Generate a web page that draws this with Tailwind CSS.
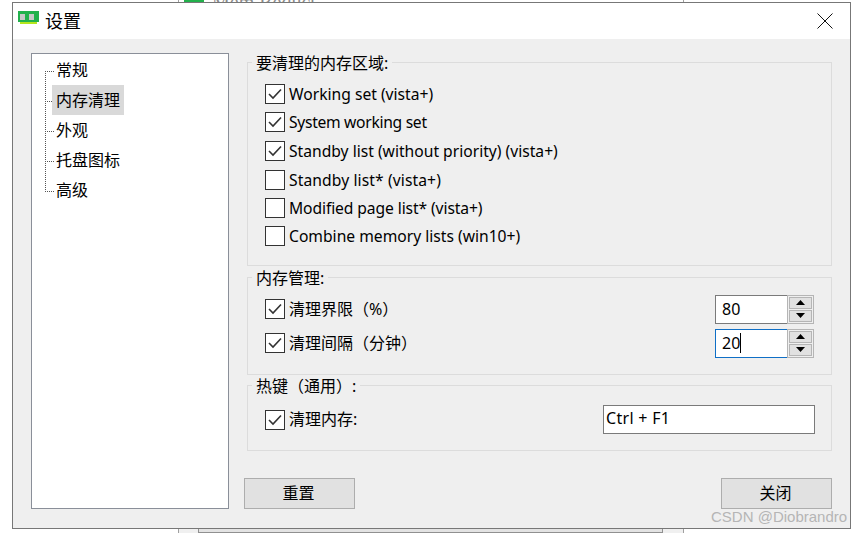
<!DOCTYPE html>
<html lang="zh">
<head>
  <meta charset="UTF-8" />
  <title>设置</title>
  <script src="https://cdn.jsdelivr.net/npm/@tailwindcss/browser@4"></script>
</head>
<body class="bg-white">
  <div class="relative w-[864px] h-[533px] overflow-hidden bg-white text-black text-[16px] leading-[22px] [text-spacing-trim:space-all] font-['Noto_Sans','Noto_Sans_CJK_SC',sans-serif]">

    <!-- window behind the dialog -->
    <div class="absolute left-[178px] top-[-8px] w-[506px] h-[541px] bg-white border-x border-[#a0a0a0]">
      <div class="flex items-center gap-[8px] pl-[5px] text-[#8a8a8a] text-[20px] leading-[20px]">
        <span class="w-[20px] h-[12px] bg-[#22b14c]"></span>
        <span class="font-['Liberation_Serif',serif]">Mem Reduct</span>
      </div>
      <div class="absolute left-0 right-0 bottom-0 h-[5px] bg-[#f0f0f0] px-[19px]">
        <div class="w-[465px] h-full bg-[#e3e3e3] border-x border-b border-[#909090]"></div>
      </div>
    </div>

    <!-- dialog -->
    <div class="relative ml-[12px] mt-[2px] w-[839px] h-[527px] border border-[#777777] bg-[#efefef] flex flex-col">
      <div class="h-[36px] shrink-0 bg-white flex items-center pl-[5px]">
        <svg class="w-[21px] h-[14px] mt-[-6px]" viewBox="0 0 21 14">
          <rect x="0" y="0" width="21" height="11" fill="#22b14c" />
          <rect x="2" y="11" width="17" height="2" fill="#b5e61d" />
          <rect x="2" y="3" width="5" height="6" fill="#c8c8c8" />
          <rect x="11" y="3" width="5" height="6" fill="#c8c8c8" />
        </svg>
        <span class="ml-[6px] text-[18px]">设置</span>
        <svg class="ml-auto mr-[17px] w-[16px] h-[16px]" viewBox="0 0 16 16" fill="none" stroke="#111111" stroke-width="1">
          <path d="M0.5 0.5L15.5 15.5M15.5 0.5L0.5 15.5" />
        </svg>
      </div>

      <div class="flex-1 flex pl-[18px] pt-[14px] pb-[19px]">
        <!-- tree -->
        <div class="relative w-[198px] h-full bg-white border border-[#8a8f99] pt-[1px] shrink-0">
          <svg class="absolute left-[13px] top-[17px] w-[10px] h-[121px]" viewBox="0 0 10 121" fill="none" stroke="#555555" stroke-dasharray="1 1" shape-rendering="crispEdges">
            <path d="M0.5 0V121" />
            <path d="M0 0.5H10M0 30.5H10M0 60.5H10M0 90.5H10M0 120.5H10" />
          </svg>
          <div class="relative h-[30px] pl-[20px] flex items-center"><span class="px-[4px] leading-[30px]">常规</span></div>
          <div class="relative h-[30px] pl-[20px] flex items-center"><span class="px-[4px] leading-[30px] bg-[#d9d9d9]">内存清理</span></div>
          <div class="relative h-[30px] pl-[20px] flex items-center"><span class="px-[4px] leading-[30px]">外观</span></div>
          <div class="relative h-[30px] pl-[20px] flex items-center"><span class="px-[4px] leading-[30px]">托盘图标</span></div>
          <div class="relative h-[30px] pl-[20px] flex items-center"><span class="px-[4px] leading-[30px]">高级</span></div>
        </div>

        <!-- right column -->
        <div class="ml-[15px] w-[588px] flex flex-col pt-[9px]">
          <section class="relative ml-[3px] h-[204px] border border-[#dcdcdc] pl-[17px] pt-[17px]">
            <span class="absolute left-[4px] top-[-11px] px-[4px] bg-[#efefef]">要清理的内存区域:</span>
            <div class="flex flex-col text-[15.65px]">
              <label class="h-[28px] flex items-center gap-[4px]">
                <span class="w-[20px] h-[20px] bg-white border border-[#333333] flex items-center justify-center"><svg class="w-[14px] h-[12px]" viewBox="0 0 14 12" fill="none" stroke="#333333" stroke-width="1.6"><path d="M1 6L5 10L13 1.5" /></svg></span>
                Working set (vista+)
              </label>
              <label class="h-[28px] mb-[1px] flex items-center gap-[4px] tracking-[-0.3px]">
                <span class="w-[20px] h-[20px] bg-white border border-[#333333] flex items-center justify-center"><svg class="w-[14px] h-[12px]" viewBox="0 0 14 12" fill="none" stroke="#333333" stroke-width="1.6"><path d="M1 6L5 10L13 1.5" /></svg></span>
                System working set
              </label>
              <label class="h-[28px] flex items-center gap-[4px]">
                <span class="w-[20px] h-[20px] bg-white border border-[#333333] flex items-center justify-center"><svg class="w-[14px] h-[12px]" viewBox="0 0 14 12" fill="none" stroke="#333333" stroke-width="1.6"><path d="M1 6L5 10L13 1.5" /></svg></span>
                Standby list (without priority) (vista+)
              </label>
              <label class="h-[29px] flex items-center gap-[4px] tracking-[0.1px]">
                <span class="w-[20px] h-[20px] bg-white border border-[#333333]"></span>
                Standby list* (vista+)
              </label>
              <label class="h-[28px] flex items-center gap-[4px] tracking-[-0.1px]">
                <span class="w-[20px] h-[20px] bg-white border border-[#333333]"></span>
                Modified page list* (vista+)
              </label>
              <label class="h-[28px] flex items-center gap-[4px]">
                <span class="w-[20px] h-[20px] bg-white border border-[#333333]"></span>
                Combine memory lists (win10+)
              </label>
            </div>
          </section>

          <section class="relative ml-[3px] mt-[11px] h-[98px] border border-[#dcdcdc] pl-[17px] pt-[17px] pr-[17px]">
            <span class="absolute left-[4px] top-[-11px] px-[4px] bg-[#efefef]">内存管理:</span>
            <div class="flex flex-col gap-[6px]">
              <div class="h-[28px] flex items-center gap-[4px]">
                <span class="w-[20px] h-[20px] bg-white border border-[#333333] flex items-center justify-center"><svg class="w-[14px] h-[12px]" viewBox="0 0 14 12" fill="none" stroke="#333333" stroke-width="1.6"><path d="M1 6L5 10L13 1.5" /></svg></span>
                清理界限（%）
                <div class="ml-auto w-[99px] h-[29px] flex">
                  <div class="w-[72px] bg-white border-y border-l border-[#7a7a7a] pl-[6px] leading-[27px]">80</div>
                  <div class="w-[27px] border border-[#b5b5b5] flex flex-col p-[1px] gap-[1px]">
                    <div class="flex-1 bg-[#e1e1e1] border border-[#b5b5b5] flex items-center justify-center"><svg class="w-[9px] h-[5px]" viewBox="0 0 9 5"><path d="M4.5 0L9 5H0Z" /></svg></div>
                    <div class="flex-1 bg-[#e1e1e1] border border-[#b5b5b5] flex items-center justify-center"><svg class="w-[9px] h-[5px]" viewBox="0 0 9 5"><path d="M0 0H9L4.5 5Z" /></svg></div>
                  </div>
                </div>
              </div>
              <div class="h-[28px] flex items-center gap-[4px]">
                <span class="w-[20px] h-[20px] bg-white border border-[#333333] flex items-center justify-center"><svg class="w-[14px] h-[12px]" viewBox="0 0 14 12" fill="none" stroke="#333333" stroke-width="1.6"><path d="M1 6L5 10L13 1.5" /></svg></span>
                清理间隔（分钟）
                <div class="ml-auto w-[99px] h-[29px] flex">
                  <div class="w-[72px] bg-white border-y border-l border-[#0f6fc6] pl-[6px] leading-[27px] flex"><span>20</span><span class="w-[1px] h-[20px] mt-[3px] bg-black"></span></div>
                  <div class="w-[27px] border border-[#b5b5b5] flex flex-col p-[1px] gap-[1px]">
                    <div class="flex-1 bg-[#e1e1e1] border border-[#b5b5b5] flex items-center justify-center"><svg class="w-[9px] h-[5px]" viewBox="0 0 9 5"><path d="M4.5 0L9 5H0Z" /></svg></div>
                    <div class="flex-1 bg-[#e1e1e1] border border-[#b5b5b5] flex items-center justify-center"><svg class="w-[9px] h-[5px]" viewBox="0 0 9 5"><path d="M0 0H9L4.5 5Z" /></svg></div>
                  </div>
                </div>
              </div>
            </div>
          </section>

          <section class="relative ml-[3px] mt-[10px] h-[66px] border border-[#dcdcdc] pl-[17px] pt-[19px] pr-[16px]">
            <span class="absolute left-[4px] top-[-11px] px-[4px] bg-[#efefef]">热键（通用）:</span>
            <div class="h-[29px] flex items-center gap-[4px]">
              <span class="w-[20px] h-[20px] bg-white border border-[#333333] flex items-center justify-center"><svg class="w-[14px] h-[12px]" viewBox="0 0 14 12" fill="none" stroke="#333333" stroke-width="1.6"><path d="M1 6L5 10L13 1.5" /></svg></span>
              <span class="mt-[-2px]">清理内存:</span>
              <div class="ml-auto w-[212px] h-[29px] bg-white border border-[#7a7a7a] pl-[2px] leading-[25px] tracking-[0.3px]">Ctrl + F1</div>
            </div>
          </section>

          <div class="mt-auto flex justify-between">
            <button class="w-[111px] h-[31px] bg-[#e1e1e1] border border-[#adadad] pb-[2px] pr-[2px]">重置</button>
            <button class="w-[111px] h-[31px] bg-[#e1e1e1] border border-[#adadad] pb-[2px] pr-[2px]">关闭</button>
          </div>
        </div>
      </div>
    </div>

    <!-- watermark -->
    <div class="absolute left-[711px] top-[507px] text-[15px] leading-[20px] text-[#b5b5b5] font-['Liberation_Sans',sans-serif]">CSDN @Diobrandro</div>
  </div>
</body>
</html>
